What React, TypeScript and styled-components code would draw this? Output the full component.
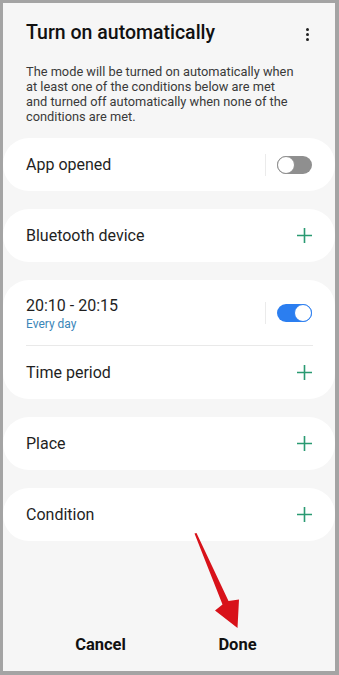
import styled, { createGlobalStyle } from "styled-components";

const GlobalStyle = createGlobalStyle`
  html, body {
    margin: 0;
    padding: 0;
    background: #a4a4a4;
  }
  * {
    box-sizing: border-box;
  }
`;

const Frame = styled.div`
  position: relative;
  width: 339px;
  height: 675px;
  border-style: solid;
  border-color: #a4a4a4;
  border-width: 3px 4px 4px 3px;
  background: #f6f6f6;
  font-family: Roboto, "Noto Sans", sans-serif;
  color: #1f1f1f;
  display: flex;
  flex-direction: column;
  overflow: hidden;
`;

const Header = styled.div`
  display: flex;
  align-items: center;
  justify-content: space-between;
  padding: 18px 26px 0 23px;
`;

const Title = styled.h1`
  margin: 0;
  font-size: 19.5px;
  line-height: 24px;
  font-weight: 500;
  color: #111;
`;

const Kebab = styled.div`
  display: flex;
  flex-direction: column;
  gap: 2px;
  padding-top: 2px;

  span {
    width: 3px;
    height: 3px;
    border-radius: 50%;
    background: #222;
  }
`;

const Description = styled.p`
  margin: 19px 38px 0 23px;
  font-size: 12.8px;
  line-height: 15px;
  color: #3a3a3a;
`;

const List = styled.div`
  display: flex;
  flex-direction: column;
  gap: 18px;
  margin-top: 14px;
`;

const Card = styled.div`
  background: #fff;
  border-radius: 26px;
`;

const Row = styled.div<{ $tall?: boolean }>`
  display: flex;
  align-items: center;
  justify-content: space-between;
  height: ${(p) => (p.$tall ? "65px" : "53px")};
  padding: 0 22px 0 23px;
`;

const Label = styled.div`
  font-size: 16px;
  color: #1f1f1f;
`;

const Stack = styled.div`
  display: flex;
  flex-direction: column;
  gap: 2px;
  padding-top: 2px;
`;

const Sub = styled.div`
  font-size: 12px;
  color: #3a86b8;
`;

const Divider = styled.div`
  height: 1px;
  margin: 0 22px 0 23px;
  background: #e9e9e9;
`;

const SwitchGroup = styled.div`
  display: flex;
  align-items: center;
  gap: 11px;
  margin-right: 1px;
`;

const VLine = styled.div`
  width: 1px;
  height: 22px;
  background: #ebebeb;
`;

const Track = styled.div<{ $on?: boolean }>`
  position: relative;
  width: 35px;
  height: 18px;
  border-radius: 9px;
  background: ${(p) => (p.$on ? "#2b7ef0" : "#8f8f8f")};
`;

const Knob = styled.div<{ $on?: boolean }>`
  position: absolute;
  top: 0;
  ${(p) => (p.$on ? "right: 0;" : "left: 0;")}
  width: 18px;
  height: 18px;
  border-radius: 50%;
  background: #fff;
  border: 1.5px solid ${(p) => (p.$on ? "#2b7ef0" : "#8f8f8f")};
`;

const Footer = styled.div`
  margin-top: auto;
  display: flex;
  padding: 0 29px 15px 29px;
`;

const FooterButton = styled.button`
  flex: 1;
  border: none;
  background: none;
  font-family: Roboto, "Noto Sans", sans-serif;
  font-size: 16.5px;
  font-weight: 700;
  color: #111;
  padding: 0;
  height: 24px;
`;

const ArrowOverlay = styled.svg`
  position: absolute;
  left: -3px;
  top: -3px;
  pointer-events: none;
`;

function Plus() {
  return (
    <svg width="17" height="17" viewBox="0 0 17 17">
      <path d="M8.5 1v15M1 8.5h15" stroke="#2a9a72" strokeWidth="1.6" fill="none" />
    </svg>
  );
}

function Toggle({ on }: { on?: boolean }) {
  return (
    <SwitchGroup>
      <VLine />
      <Track $on={on}>
        <Knob $on={on} />
      </Track>
    </SwitchGroup>
  );
}

function AddRow({ label }: { label: string }) {
  return (
    <Row>
      <Label>{label}</Label>
      <Plus />
    </Row>
  );
}

export default function App() {
  return (
    <>
      <GlobalStyle />
      <Frame>
        <Header>
          <Title>Turn on automatically</Title>
          <Kebab>
            <span />
            <span />
            <span />
          </Kebab>
        </Header>
        <Description>
          The mode will be turned on automatically when at least one of the conditions below are met
          and turned off automatically when none of the conditions are met.
        </Description>
        <List>
          <Card>
            <Row>
              <Label>App opened</Label>
              <Toggle />
            </Row>
          </Card>
          <Card>
            <AddRow label="Bluetooth device" />
          </Card>
          <Card>
            <Row $tall>
              <Stack>
                <Label>20:10 - 20:15</Label>
                <Sub>Every day</Sub>
              </Stack>
              <Toggle on />
            </Row>
            <Divider />
            <AddRow label="Time period" />
          </Card>
          <Card>
            <AddRow label="Place" />
          </Card>
          <Card>
            <AddRow label="Condition" />
          </Card>
        </List>
        <Footer>
          <FooterButton>Cancel</FooterButton>
          <FooterButton>Done</FooterButton>
        </Footer>
        <ArrowOverlay width="339" height="675" viewBox="0 0 339 675">
          <path
            d="M194.5 533.5 L196.5 533 L228.5 601 L239 599.5 L237.5 628 L215 610.5 L222.5 604.5 Z"
            fill="#d8121a"
          />
        </ArrowOverlay>
      </Frame>
    </>
  );
}
